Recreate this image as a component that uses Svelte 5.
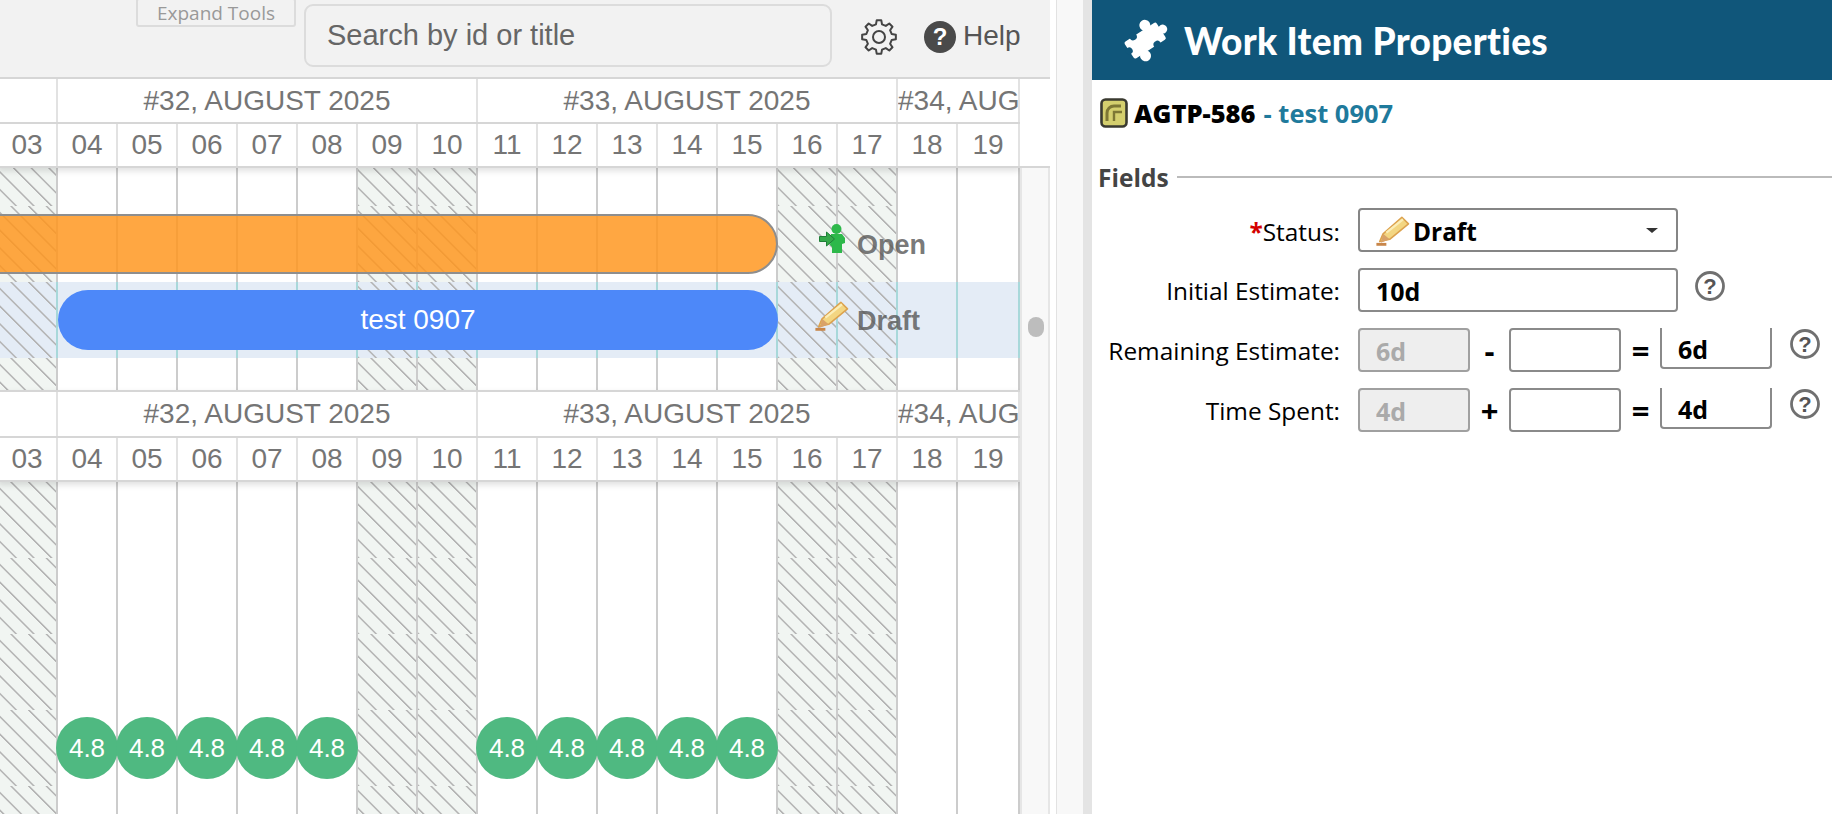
<script>
  const days = [
    { d: '03', off: true }, { d: '04', load: true }, { d: '05', load: true }, { d: '06', load: true },
    { d: '07', load: true }, { d: '08', load: true }, { d: '09', off: true }, { d: '10', off: true },
    { d: '11', load: true }, { d: '12', load: true }, { d: '13', load: true }, { d: '14', load: true },
    { d: '15', load: true }, { d: '16', off: true }, { d: '17', off: true }, { d: '18' }, { d: '19' }
  ];

  const topRows = [{ h: 38 }, { h: 76 }, { h: 76, sel: true }, { h: 76 }];
  const bottomRows = [{ h: 76 }, { h: 76 }, { h: 76 }, { h: 76, load: true }, { h: 76 }];

  // 8-toothed gear outline
  function gear(cx, cy, R, r, teeth) {
    const step = (Math.PI * 2) / teeth;
    let p = '';
    for (let i = 0; i < teeth; i++) {
      const a = i * step - Math.PI / 2;
      const pts = [
        [r, a - step * 0.3],
        [R, a - step * 0.17],
        [R, a + step * 0.17],
        [r, a + step * 0.3]
      ];
      pts.forEach(([q, t], j) => {
        const x = (cx + q * Math.cos(t)).toFixed(2);
        const y = (cy + q * Math.sin(t)).toFixed(2);
        p += (i === 0 && j === 0 ? 'M' : 'L') + x + ' ' + y + ' ';
      });
    }
    return p + 'Z';
  }
  const gearPath = gear(18, 18, 17, 13, 8);
</script>

{#snippet pencil()}
  <svg class="pencil" viewBox="0 0 32 28" width="36" height="31">
    <path d="M1 26.5h9" stroke="#c8864a" stroke-width="2.6" />
    <path d="M4 24l3-7L24 2l6 6L13 22z" fill="#f3d682" stroke="#dca24e" stroke-width="1.4" stroke-linejoin="round" />
    <path d="M7 17l6 5-8 3z" fill="#d9a268" />
    <path d="M10 16L25 4" stroke="#fbeeb8" stroke-width="2" />
  </svg>
{/snippet}

{#snippet header(second)}
  <div class="head" class:second>
    <div class="weeks">
      <div class="week blank"></div>
      <div class="week wide">#32, AUGUST 2025</div>
      <div class="week wide">#33, AUGUST 2025</div>
      <div class="week cut">#34, AUGUST 2025</div>
    </div>
    <div class="days">
      {#each days as day}
        <div class="day">{day.d}</div>
      {/each}
    </div>
  </div>
{/snippet}

{#snippet grid(rows)}
  {#each rows as row}
    <div class="row" class:sel={row.sel} style="height: {row.h}px">
      {#each days as day}
        <div class="cell" class:off={day.off}>
          {#if row.load && day.load}
            <span class="load">4.8</span>
          {/if}
        </div>
      {/each}
    </div>
  {/each}
{/snippet}

{#snippet hint()}
  <svg class="hint" viewBox="0 0 32 32" width="32" height="32">
    <circle cx="16" cy="16" r="13.5" fill="#fff" stroke="#707070" stroke-width="2.8" />
    <text x="16" y="23.500" text-anchor="middle">?</text>
  </svg>
{/snippet}

<div class="app">
  <div class="left">
    <div class="toolbar">
      <button class="expand">Expand Tools</button>
      <input class="search" placeholder="Search by id or title" />
      <svg class="gear" viewBox="0 0 36 36" width="36" height="36">
        <path d={gearPath} fill="none" stroke="#444" stroke-width="2" stroke-linejoin="round" />
        <circle cx="18" cy="18" r="6" fill="none" stroke="#444" stroke-width="2" />
      </svg>
      <svg class="help-icon" viewBox="0 0 32 32" width="32" height="32">
        <circle cx="16" cy="16" r="16" fill="#4a4a4a" />
        <text x="16" y="24" text-anchor="middle">?</text>
      </svg>
      <span class="help">Help</span>
    </div>

    <div class="gantt">
      <div class="charts">
        {@render header(false)}
        <div class="body top">
          {@render grid(topRows)}
          <div class="bar orange"></div>
          <div class="bar blue">test 0907</div>
          <div class="state open">
            <svg viewBox="0 0 26 30" width="26" height="30">
              <circle cx="17.5" cy="5" r="5" fill="#2db84a" />
              <path d="M12 10h11l3 4v5l-3 1v9h-10v-6l-2-2z" fill="#2db84a" />
              <path d="M0.5 12.5h7V8l8 7-8 7v-4.500h-7z" fill="#35a94a" stroke="#1f7f38" stroke-width="1" />
            </svg>
            <span>Open</span>
          </div>
          <div class="state draft">
            {@render pencil()}
            <span>Draft</span>
          </div>
        </div>
        {@render header(true)}
        <div class="body bottom">
          {@render grid(bottomRows)}
        </div>
      </div>
      <div class="side">
        <div class="side-head"></div>
        <div class="track"><div class="thumb"></div></div>
      </div>
    </div>
  </div>

  <div class="gutter"></div>

  <div class="panel">
    <div class="title">
      <svg class="puzzle" viewBox="0 0 46 44" width="46" height="44">
        <g transform="rotate(-33 23 22)">
          <rect x="3" y="12" width="38" height="20" rx="2" fill="#fff" />
          <circle cx="30" cy="9" r="5.500" fill="#fff" />
          <circle cx="14" cy="35" r="5.500" fill="#fff" />
          <circle cx="43" cy="22" r="4.500" fill="#fff" />
          <circle cx="14" cy="12" r="3.800" fill="#10567a" />
          <circle cx="30" cy="32" r="3.800" fill="#10567a" />
          <circle cx="3" cy="22" r="3.500" fill="#10567a" />
        </g>
      </svg>
      <h1>Work Item Properties</h1>
    </div>

    <div class="item">
      <svg viewBox="0 0 28 30" width="28" height="30">
        <rect x="1.500" y="1.500" width="25" height="27" rx="4" fill="#d4cf6e" stroke="#3a3a30" stroke-width="2.600" />
        <path d="M21 8h-7a7 7 0 0 0-7 7v8" fill="none" stroke="#7d7734" stroke-width="3" />
        <path d="M22 14h-8v9" fill="none" stroke="#7d7734" stroke-width="2.400" />
      </svg>
      <b>AGTP-586</b>
      <span>- test 0907</span>
    </div>

    <div class="legend">
      <span>Fields</span>
      <i></i>
    </div>

    <div class="form">
      <div class="line">
        <label for="f-status"><em>*</em>Status:</label>
        <div class="select" id="f-status">
          {@render pencil()}
          <b>Draft</b>
          <i class="caret"></i>
        </div>
      </div>
      <div class="line">
        <label for="f-initial">Initial Estimate:</label>
        <input id="f-initial" class="full" value="10d" />
        {@render hint()}
      </div>
      <div class="line">
        <label for="f-rem">Remaining Estimate:</label>
        <input id="f-rem" class="num" disabled value="6d" />
        <span class="op">-</span>
        <input class="num" />
        <span class="op eq">=</span>
        <input class="num result" value="6d" />
        {@render hint()}
      </div>
      <div class="line">
        <label for="f-spent">Time Spent:</label>
        <input id="f-spent" class="num" disabled value="4d" />
        <span class="op">+</span>
        <input class="num" />
        <span class="op eq">=</span>
        <input class="num result" value="4d" />
        {@render hint()}
      </div>
    </div>
  </div>
</div>

<style>
  :global(body) {
    margin: 0;
    background: #fff;
  }

  .app {
    display: flex;
    width: 1832px;
    height: 814px;
    overflow: hidden;
    font-family: "Liberation Sans", Arial, sans-serif;
  }

  .left {
    display: flex;
    flex-direction: column;
    flex: none;
    width: 1050px;
  }

  .toolbar {
    display: flex;
    align-items: flex-start;
    flex: none;
    box-sizing: border-box;
    height: 79px;
    padding-left: 136px;
    background: #f2f2f2;
    border-bottom: 2px solid #d6d6d6;
  }

  .expand {
    box-sizing: border-box;
    width: 160px;
    height: 29px;
    margin-top: -2px;
    padding: 0 0 3px;
    background: #f2f2f2;
    border: 2px solid #dcdcdc;
    border-radius: 3px;
    color: #999;
    font: 19px "Open Sans", sans-serif;
  }

  .search {
    box-sizing: border-box;
    width: 528px;
    height: 63px;
    margin: 4px 0 0 8px;
    padding: 0 21px;
    background: #f2f2f2;
    border: 2px solid #dcdcdc;
    border-radius: 9px;
    font: 29px "Liberation Sans", sans-serif;
  }

  .search::placeholder {
    color: #666;
    opacity: 1;
  }

  .gear {
    margin: 19px 0 0 29px;
  }

  .help-icon {
    margin: 21px 0 0 27px;
  }

  .help-icon text {
    fill: #fff;
    font: bold 24px "Liberation Sans", sans-serif;
  }

  .help {
    margin: 18px 0 0 7px;
    color: #555;
    font-size: 28px;
    line-height: 36px;
  }

  .gantt {
    display: flex;
    flex: 1;
    min-height: 0;
  }

  .charts {
    flex: none;
    width: 1020px;
    overflow: hidden;
  }

  .head {
    position: relative;
    z-index: 2;
    margin-left: -2px;
    background: #fff;
    box-shadow: 0 3px 6px rgba(0, 0, 0, 0.12);
    color: #757575;
  }

  .head.second {
    border-top: 2px solid #d6d6d6;
  }

  .weeks {
    display: flex;
    height: 43px;
    border-bottom: 2px solid #d6d6d6;
    font-size: 28px;
    line-height: 43px;
  }

  .second .weeks {
    height: 44px;
  }

  .week {
    flex: none;
    box-sizing: border-box;
    height: 100%;
    border-right: 2px solid #e2e2e2;
    text-align: center;
    white-space: nowrap;
  }

  .week.blank {
    width: 60px;
  }

  .week.wide {
    width: 420px;
  }

  .week.cut {
    flex: 1;
    min-width: 0;
    overflow: hidden;
    text-align: left;
  }

  .days {
    display: flex;
    height: 42px;
    border-bottom: 2px solid #d6d6d6;
    font-size: 28px;
    line-height: 42px;
  }

  .day {
    flex: 0 0 60px;
    box-sizing: border-box;
    border-right: 2px solid #e2e2e2;
    text-align: center;
  }

  .day:last-child {
    flex: 1 0 60px;
  }

  .body {
    position: relative;
    overflow: hidden;
  }

  .body.top {
    height: 222px;
  }

  .body.bottom {
    height: 332px;
  }

  .row {
    display: flex;
    margin-left: -2px;
    --base: #fff;
    --hatch: #f1f5f2;
    --rule: #cccccc;
  }

  .row.sel {
    --base: #e4ecf6;
    --hatch: #e4ecf6;
    --rule: #a8d8da;
  }

  .cell {
    display: flex;
    align-items: center;
    justify-content: center;
    flex: 0 0 60px;
    min-width: 0;
    box-sizing: border-box;
    background: var(--base);
    border-right: 2px solid var(--rule);
  }

  .cell:last-child {
    flex: 1 0 60px;
  }

  .cell.off {
    background: repeating-linear-gradient(45deg, #b4b4b4 0 0.7px, var(--hatch) 1.7px 11.8px, #b4b4b4 12.5px);
  }

  .load {
    position: relative;
    z-index: 1;
    flex: none;
    width: 62px;
    height: 62px;
    border-radius: 50%;
    background: #4fb981;
    color: #fff;
    font-size: 26px;
    line-height: 62px;
    text-align: center;
  }

  .bar {
    position: absolute;
    box-sizing: border-box;
    border-radius: 0 30px 30px 0;
  }

  .orange {
    left: -40px;
    top: 46px;
    width: 818px;
    height: 60px;
    background: rgba(255, 150, 30, 0.84);
    border: 2px solid #8e8e8e;
  }

  .blue {
    left: 58px;
    top: 122px;
    width: 720px;
    height: 60px;
    border-radius: 30px;
    background: #4d88f9;
    color: #fff;
    font-size: 28px;
    line-height: 60px;
    text-align: center;
  }

  .state {
    position: absolute;
    display: flex;
    align-items: flex-start;
    color: rgba(85, 85, 85, 0.8);
    font-size: 27px;
    font-weight: bold;
  }

  .state span {
    margin-top: 6px;
    line-height: 30px;
  }

  .state.open {
    left: 819px;
    top: 56px;
    gap: 12px;
  }

  .state.draft {
    left: 814px;
    top: 132px;
    gap: 7px;
  }

  .side {
    flex: none;
    display: flex;
    flex-direction: column;
    width: 30px;
  }

  .side-head {
    flex: none;
    height: 89px;
    box-sizing: border-box;
    border-bottom: 2px solid #d6d6d6;
  }

  .track {
    flex: 1;
    background: #f8f8f8;
    border-left: 2px solid #e6e6e6;
    border-right: 2px solid #e6e6e6;
  }

  .thumb {
    width: 16px;
    height: 20px;
    margin: 149px 0 0 6px;
    border-radius: 8px;
    background: #bdbdbd;
  }

  .gutter {
    flex: none;
    box-sizing: border-box;
    width: 42px;
    background: #f8f8f8;
    border-left: 6px solid #fff;
    border-right: 9px solid #e4e4e4;
    box-shadow: inset 1px 0 0 #e2e2e2;
  }

  .panel {
    flex: 1;
    min-width: 0;
    font-family: "Open Sans", sans-serif;
    color: #000;
  }

  .title {
    display: flex;
    align-items: center;
    gap: 15px;
    height: 80px;
    padding-left: 31px;
    background: #10567a;
  }

  .puzzle {
    flex: none;
    overflow: visible;
    filter: blur(0.5px);
  }

  .title h1 {
    margin: 0;
    color: #fff;
    font: 900 37px Lato, sans-serif;
    letter-spacing: 0.3px;
  }

  .item {
    display: flex;
    align-items: center;
    gap: 6px;
    height: 36px;
    margin: 15px 0 0 8px;
    font-size: 25.5px;
    font-weight: bold;
  }

  .item span {
    margin-left: 2px;
    color: #1f7a9c;
  }

  .legend {
    display: flex;
    align-items: center;
    gap: 8px;
    height: 32px;
    margin: 30px 0 0 6px;
    color: #444;
    font-size: 24.5px;
    font-weight: bold;
  }

  .legend i {
    flex: 1;
    height: 2px;
    background: #bbb;
  }

  .form {
    display: flex;
    flex-direction: column;
    gap: 16px;
    margin-top: 15px;
  }

  .line {
    display: flex;
    align-items: center;
    height: 44px;
  }

  .line label {
    flex: none;
    width: 248px;
    margin-right: 18px;
    font-size: 24.4px;
    text-align: right;
  }

  .line:first-child label {
    padding-top: 2px;
  }

  .line em {
    color: #d40000;
    font-style: normal;
    font-weight: bold;
  }

  .select {
    display: flex;
    align-items: center;
    box-sizing: border-box;
    width: 320px;
    height: 44px;
    padding-left: 15px;
    border: 2px solid #858585;
    border-radius: 4px;
    font-size: 24.4px;
  }

  .select b {
    margin-left: 2px;
    padding-top: 2px;
  }

  .caret {
    margin-left: auto;
    margin-right: 18px;
    border-left: 6px solid transparent;
    border-right: 6px solid transparent;
    border-top: 5px solid #333;
  }

  input.full,
  input.num {
    box-sizing: border-box;
    height: 44px;
    padding: 2px 0 0 16px;
    background: #fff;
    border: 2px solid #8a8a8a;
    border-radius: 4px;
    color: #000;
    font: bold 25px "Open Sans", sans-serif;
  }

  input.full {
    width: 320px;
  }

  input.num {
    width: 112px;
  }

  input.num:disabled {
    background: #eee;
    border-color: #a0a0a0;
    color: #aaa;
  }

  input.result {
    align-self: flex-start;
    height: 41px;
    border-top: none;
    border-radius: 0 0 4px 4px;
  }

  .op {
    flex: none;
    width: 39px;
    font-size: 31px;
    font-weight: bold;
    line-height: 40px;
    text-align: center;
  }

  .hint {
    flex: none;
    align-self: flex-start;
    margin-left: 17px;
  }

  .line:nth-child(2) .hint {
    margin: 2px 0 0 16px;
  }

  .hint text {
    fill: #555;
    font: bold 22px "Liberation Sans", sans-serif;
  }
</style>
